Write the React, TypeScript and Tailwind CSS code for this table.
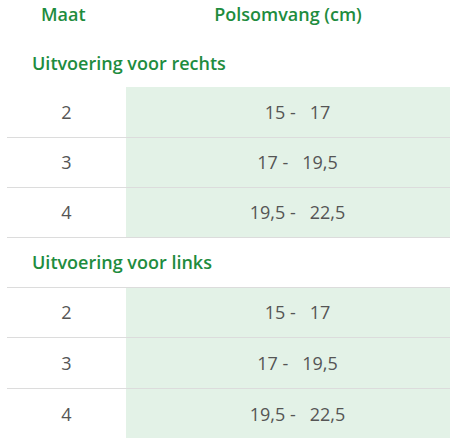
const sections = [
  { title: "Uitvoering voor rechts", top: false },
  { title: "Uitvoering voor links", top: true },
];

const rows = [
  { maat: "2", from: "15", to: "17" },
  { maat: "3", from: "17", to: "19,5" },
  { maat: "4", from: "19,5", to: "22,5" },
];

function SizeRows({ top }: { top: boolean }) {
  return (
    <div className={top ? "border-t border-[#dcdcdc]" : ""}>
      {rows.map((r, i) => (
        <div
          key={r.maat}
          className={`flex text-[18px] text-[#555555] ${top && i === 2 ? "h-[50px]" : "border-b border-[#dcdcdc]"} ${
            (i === 0 && !top) || (top && i === 1) ? "h-[51px]" : "h-[50px]"
          }`}
        >
          <div className="flex w-[119px] items-center justify-center">{r.maat}</div>
          <div className="flex flex-1 items-center justify-center whitespace-pre bg-[#e3f2e7] pl-[19px]">
            {`${r.from} -   ${r.to}`}
          </div>
        </div>
      ))}
    </div>
  );
}

export default function App() {
  return (
    <div className="w-[451px] bg-white pl-[7px] pr-[1px] font-['Open_Sans',sans-serif]">
      <div className="flex h-[28px] items-center text-[18px] font-semibold text-[#1e8c3e]">
        <div className="w-[119px] pl-[34px]">Maat</div>
        <div className="flex-1 text-center">Polsomvang (cm)</div>
      </div>
      {sections.map((s, i) => (
        <div key={s.title}>
          <div
            className={`flex items-center pl-[25px] text-[18px] font-semibold text-[#1e8c3e] ${i === 0 ? "h-[59px] pt-[12px]" : "h-[49px]"}`}
          >
            {s.title}
          </div>
          <SizeRows top={s.top} />
        </div>
      ))}
    </div>
  );
}
